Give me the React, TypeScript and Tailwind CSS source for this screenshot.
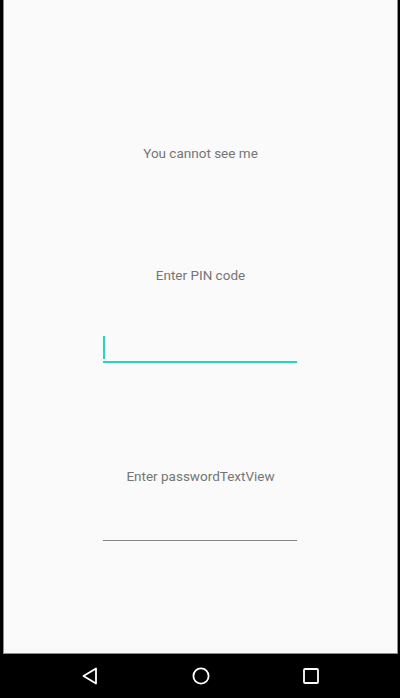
import React from "react";

export default function App() {
  const font = { fontFamily: "Roboto, 'Liberation Sans', sans-serif" };
  return (
    <div className="w-[400px] h-[698px] bg-black flex flex-col" style={font}>
      <div className="h-[654px] pl-[3px] pr-[2px]">
        <div className="h-full bg-[#fafafa] border-l border-r border-b border-[#8d8d8d] flex flex-col items-center">
          <div className="mt-[143px] h-5 leading-5 text-[13.5px] text-[#757575]">You cannot see me</div>
          <div className="mt-[102px] h-5 leading-5 text-[13.5px] text-[#757575]">Enter PIN code</div>
          <div className="mt-[51px] mr-px w-[194px] flex flex-col">
            <div className="w-[2px] h-[23px] bg-[#1ed8c2]" />
            <div className="mt-[2px] h-[2px] bg-[#1ed8c2]" />
          </div>
          <div className="mt-[103px] h-5 leading-5 text-[13.5px] text-[#757575]">Enter passwordTextView</div>
          <div className="mt-[54px] mr-px w-[194px] h-px bg-[#858585]" />
        </div>
      </div>
      <div className="flex-1 flex items-center justify-between pl-[80px] pr-[79px]">
        <svg width="20" height="20" viewBox="0 0 20 20">
          <path d="M16 2.5 L3.5 10 L16 17.5 Z" fill="none" stroke="#fff" strokeWidth="1.8" strokeLinejoin="round" />
        </svg>
        <svg width="20" height="20" viewBox="0 0 20 20">
          <circle cx="10" cy="10" r="7.6" fill="none" stroke="#fff" strokeWidth="1.8" />
        </svg>
        <svg width="20" height="20" viewBox="0 0 20 20">
          <rect x="3" y="3" width="14" height="14" rx="1" fill="none" stroke="#fff" strokeWidth="1.8" />
        </svg>
      </div>
    </div>
  );
}
